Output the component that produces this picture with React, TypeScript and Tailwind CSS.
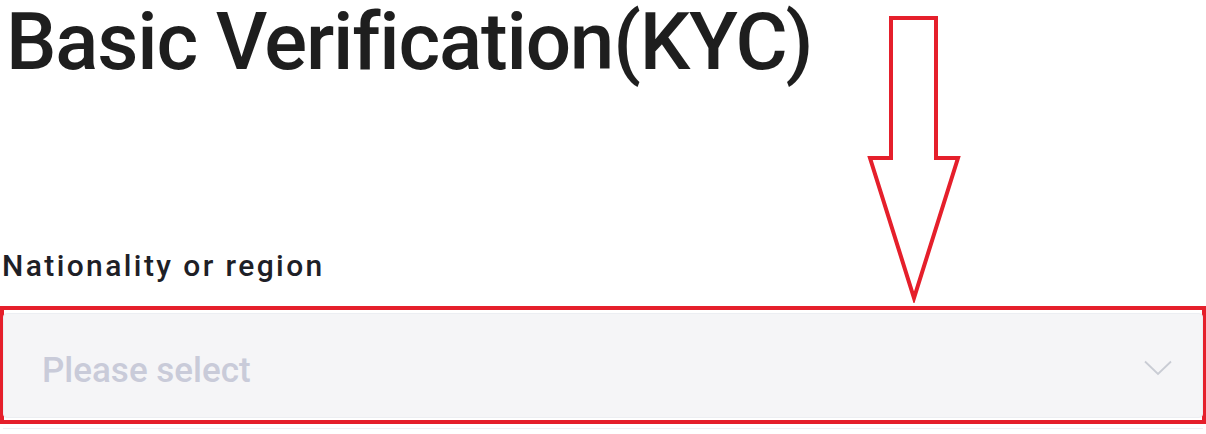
import React from "react";

export default function App() {
  return (
    <div className="relative w-[1206px] h-[434px] bg-white overflow-hidden font-['Roboto',sans-serif] text-[#1e2026]">
      <h1 className="pl-[6px] pt-[2px] text-[80px] leading-[80px] font-medium tracking-[-1.2px] text-[#1e1e1e] whitespace-nowrap">
        Basic Verification(KYC)
      </h1>
      <div className="mt-[167px] pl-[2px] text-[30px] leading-[34px] font-medium tracking-[2.4px] text-[#1e2026] whitespace-nowrap">
        Nationality or region
      </div>
      <div className="mt-[23px] h-[118px] border-4 border-[#e51f2b] bg-white pt-[3px]">
        <div className="h-[105px] mx-[-1px] rounded-[4px] border border-[#eceef2] bg-[#f5f5f7] flex items-center justify-between pl-[38px] pr-[30px] pt-[10px]">
          <span className="text-[35px] leading-[40px] text-[#c9cbd9] font-medium">Please select</span>
          <svg width="28" height="16" viewBox="0 0 28 16" fill="none" className="-mt-[6px]">
            <path d="M1 1.5 L14 14 L27 1.5" stroke="#c9ccd4" strokeWidth="1.8" />
          </svg>
        </div>
      </div>
      <div className="mt-[4px] mx-[3px] h-px bg-[#eef0f3]" />
      <svg
        className="absolute left-[865px] top-[15px]"
        width="98"
        height="288"
        viewBox="0 0 98 288"
        fill="none"
      >
        <path
          d="M26 3 H71 V143 H93 L49 283 L5 143 H26 Z"
          stroke="#e51f2b"
          strokeWidth="4"
          strokeLinejoin="miter"
        />
      </svg>
    </div>
  );
}
